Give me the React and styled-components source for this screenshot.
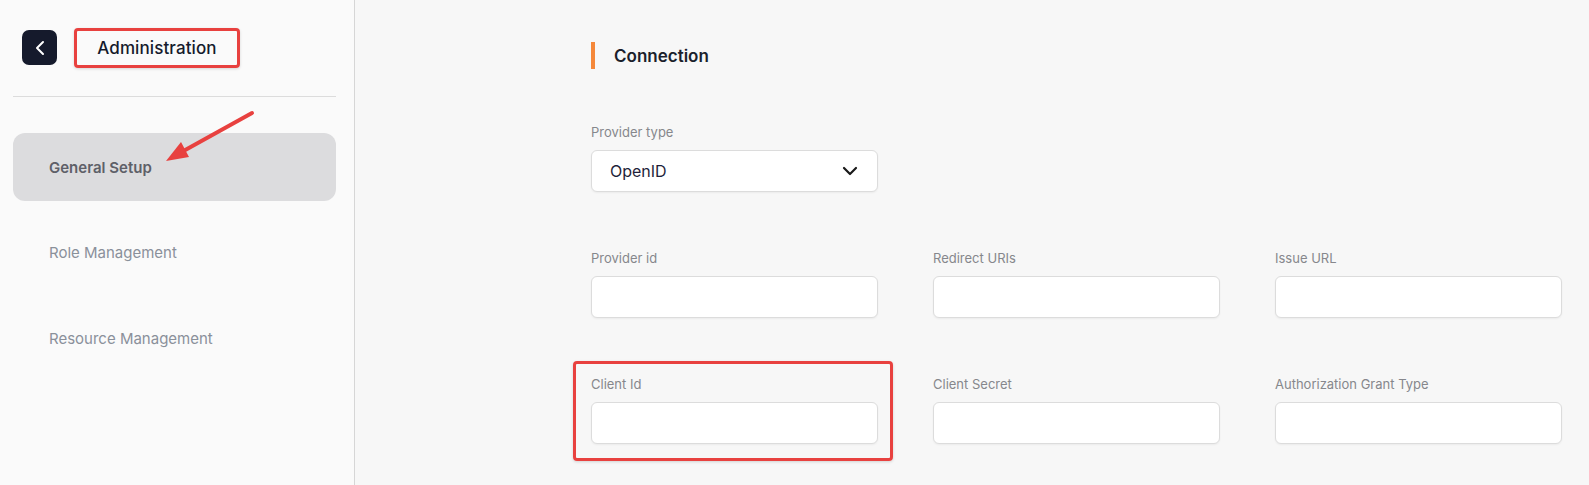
import React from "react";
import styled, { createGlobalStyle } from "styled-components";
import { ChevronLeft, ChevronDown } from "lucide-react";

const GlobalStyle = createGlobalStyle`
  html, body { margin: 0; padding: 0; }
  body { font-family: Inter, "Noto Sans", sans-serif; background: #f7f7f7; }
  * { box-sizing: border-box; }
`;

const Page = styled.div`
  display: flex;
  min-height: 100vh;
`;

const Sidebar = styled.aside`
  position: relative;
  width: 355px;
  flex-shrink: 0;
  background: #fafafa;
  border-right: 1px solid #d6d6d6;
  padding: 29px 18px 0 13px;
`;

const Header = styled.div`
  display: flex;
  align-items: center;
  gap: 17px;
  padding-left: 9px;
  height: 37px;
`;

const BackButton = styled.button`
  width: 35px;
  height: 35px;
  border: none;
  border-radius: 7px;
  background: #151a2c;
  color: #fff;
  display: flex;
  align-items: center;
  justify-content: center;
  padding: 0;
`;

const Title = styled.h1`
  margin: 0;
  width: 166px;
  height: 40px;
  display: flex;
  align-items: center;
  justify-content: center;
  font-size: 17px;
  font-weight: 500;
  color: #151a2c;
  letter-spacing: 0.1px;
  border: ${(p) => (p.$marked ? "3px solid #e8413f" : "none")};
  border-radius: 4px;
  box-shadow: ${(p) => (p.$marked ? "0 1px 3px rgba(0,0,0,0.15)" : "none")};
`;

const Divider = styled.hr`
  margin: 30px 0 0;
  border: none;
  border-top: 1px solid #dcdcdc;
`;

const Nav = styled.nav`
  display: flex;
  flex-direction: column;
  gap: 17.5px;
  margin-top: 36px;
`;

const NavItem = styled.div`
  height: 68px;
  display: flex;
  align-items: center;
  padding-left: 36px;
  border-radius: 12px;
  font-size: 15px;
  background: ${(p) => (p.$active ? "#dcdcde" : "transparent")};
  color: ${(p) => (p.$active ? "#5e6068" : "#8a909a")};
  font-weight: ${(p) => (p.$active ? 600 : 400)};
`;

const ArrowMark = styled.svg`
  position: absolute;
  left: 160px;
  top: 105px;
  overflow: visible;
`;

const Main = styled.main`
  flex: 1;
  background: #f7f7f7;
  padding: 42px 0 0 236px;
`;

const SectionHeading = styled.h2`
  margin: 0;
  height: 27px;
  display: flex;
  align-items: center;
  border-left: 4px solid #f5883a;
  padding-left: 19px;
  font-size: 17px;
  font-weight: 600;
  color: #1b1f2c;
`;

const FieldGrid = styled.div`
  display: grid;
  grid-template-columns: repeat(3, 287px);
  column-gap: 55px;
  row-gap: 56px;
  margin-top: 53px;
`;

const Field = styled.div`
  position: relative;
  display: flex;
  flex-direction: column;
  gap: 8px;
  grid-column: ${(p) => (p.$alone ? "1 / -1" : "auto")};
  max-width: 287px;

  ${(p) =>
    p.$marked &&
    `
    &::after {
      content: "";
      position: absolute;
      top: -13px;
      left: -18px;
      right: -15px;
      bottom: -17px;
      border: 3px solid #e8413f;
      border-radius: 4px;
      box-shadow: 0 1px 3px rgba(0,0,0,0.15);
      pointer-events: none;
    }
  `}
`;

const Label = styled.label`
  font-size: 13px;
  line-height: 20px;
  color: #86878c;
`;

const Input = styled.div`
  height: 42px;
  background: #fff;
  border: 1px solid #dcdcdc;
  border-radius: 6px;
  box-shadow: 0 1px 2px rgba(0, 0, 0, 0.05);
  display: flex;
  align-items: center;
  justify-content: space-between;
  padding: 0 15px 0 18px;
  font-size: 16px;
  color: #1f1f3a;
`;

const fields = [
  { label: "Provider id" },
  { label: "Redirect URIs" },
  { label: "Issue URL" },
  { label: "Client Id", marked: true },
  { label: "Client Secret" },
  { label: "Authorization Grant Type" },
];

export default function App() {
  return (
    <>
      <GlobalStyle />
      <Page>
        <Sidebar>
          <Header>
            <BackButton aria-label="Back">
              <ChevronLeft size={24} strokeWidth={2} />
            </BackButton>
            <Title $marked>Administration</Title>
          </Header>
          <Divider />
          <Nav>
            <NavItem $active>General Setup</NavItem>
            <NavItem>Role Management</NavItem>
            <NavItem>Resource Management</NavItem>
          </Nav>
          <ArrowMark width="100" height="60" viewBox="0 0 100 60">
            <line x1="92" y1="8" x2="18" y2="49" stroke="#e8413f" strokeWidth="4" strokeLinecap="round" />
            <polygon points="6,56 21,37 29,52" fill="#e8413f" />
          </ArrowMark>
        </Sidebar>
        <Main>
          <SectionHeading>Connection</SectionHeading>
          <FieldGrid>
            <Field $alone>
              <Label>Provider type</Label>
              <Input>
                OpenID
                <ChevronDown size={24} strokeWidth={2.2} color="#1a1a1a" />
              </Input>
            </Field>
            {fields.map((f) => (
              <Field key={f.label} $marked={f.marked}>
                <Label>{f.label}</Label>
                <Input />
              </Field>
            ))}
          </FieldGrid>
        </Main>
      </Page>
    </>
  );
}
